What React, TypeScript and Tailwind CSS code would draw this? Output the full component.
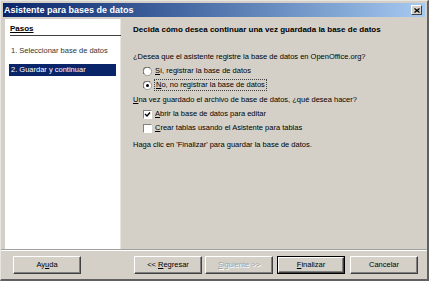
import React from 'react';

const font = { fontFamily: '"Liberation Sans", Arial, sans-serif' };

function Radio({ checked }: { checked?: boolean }) {
  return (
    <svg width="9" height="9" viewBox="0 0 12 12" className="shrink-0">
      <circle cx="6" cy="6" r="5.5" fill="#fff" stroke="#808080" />
      <path d="M1.5 9.5 A5 5 0 0 1 9.5 1.5" fill="none" stroke="#404040" />
      {checked && <circle cx="6" cy="6" r="2" fill="#000" />}
    </svg>
  );
}

function Check({ checked }: { checked?: boolean }) {
  return (
    <div className="w-[9px] h-[9px] shrink-0 bg-white border-t border-l border-t-[#808080] border-l-[#808080] border-b border-r border-b-white border-r-white flex items-center justify-center">
      {checked && (
        <svg width="7" height="7" viewBox="0 0 7 7">
          <path d="M1 3 L3 5 L6 1.5" fill="none" stroke="#000" strokeWidth="1.4" />
        </svg>
      )}
    </div>
  );
}

function Btn({ children, disabled, def }: { children: React.ReactNode; disabled?: boolean; def?: boolean }) {
  return (
    <div className={`w-[68px] h-[18px] ${def ? 'border border-black' : ''} flex`}>
      <div className="flex-1 flex items-center justify-center bg-[#d4d0c8] border-t border-l border-t-white border-l-white border-b border-r border-b-[#404040] border-r-[#404040] shadow-[inset_-1px_-1px_0_#808080]">
        <span className={`text-[7.5px] ${disabled ? 'text-[#a0a0a0] [text-shadow:1px_1px_0_#fff]' : 'text-black'}`}>{children}</span>
      </div>
    </div>
  );
}

export default function App() {
  return (
    <div className="w-[430px] h-[284px] bg-white" style={font}>
      <div className="w-[429px] h-[281px] bg-[#d4d0c8] border-t border-l border-t-[#e8e6e0] border-l-[#e8e6e0] border-r-2 border-b-2 border-r-[#606060] border-b-[#606060] flex flex-col">
        {/* title bar */}
        <div className="mx-[2px] mt-[2px] h-[14px] bg-gradient-to-r from-[#0a246a] to-[#a6caf0] flex items-center justify-between pl-[1px] pr-[3px]">
          <span className="text-white font-bold text-[9px] leading-none">Asistente para bases de datos</span>
          <div className="w-[11px] h-[10px] bg-[#d4d0c8] border-t border-l border-t-white border-l-white border-b border-r border-b-[#404040] border-r-[#404040] flex items-center justify-center">
            <svg width="6" height="5" viewBox="0 0 6 5">
              <path d="M0.5 0.5 L5.5 4.5 M5.5 0.5 L0.5 4.5" stroke="#000" strokeWidth="1.3" />
            </svg>
          </div>
        </div>

        {/* body */}
        <div className="flex flex-1 mt-[2px]">
          <div className="ml-[4px] w-[116px] bg-white border-r border-r-[#e8e6e0] pl-[5px] pt-[5px] leading-[10px]">
            <div className="font-bold text-[8px] border-b border-b-[#404040] pb-[1px] mr-[-1px]">
              <span className="underline">Pasos</span>
            </div>
            <div className="text-[7.5px] mt-[10px] text-[#333] pl-[1px]">1. Seleccionar base de datos</div>
            <div className="text-[7.5px] mt-[8px] h-[12px] mr-[4px] ml-[-1px] pl-[2px] bg-[#0a246a] text-white flex items-center">2. Guardar y continuar</div>
          </div>
          <div className="flex-1 pl-[12px] pt-[6px] text-[7.5px] leading-[10px] text-black">
            <div className="font-bold text-[8px]">Decida cómo desea continuar una vez guardada la base de datos</div>
            <div className="mt-[17px]">¿Desea que el asistente registre la base de datos en OpenOffice.org?</div>
            <div className="mt-[4px] ml-[10px] flex items-center gap-[3px]">
              <Radio />
              <span><u>S</u>í, registrar la base de datos</span>
            </div>
            <div className="mt-[4px] ml-[10px] flex items-center gap-[3px]">
              <Radio checked />
              <span className="outline outline-1 outline-dotted outline-[#404040] px-[1px]"><u>N</u>o, no registrar la base de datos</span>
            </div>
            <div className="mt-[5px]"><u>U</u>na vez guardado el archivo de base de datos, ¿qué desea hacer?</div>
            <div className="mt-[4px] ml-[10px] flex items-center gap-[3px]">
              <Check checked />
              <span><u>A</u>brir la base de datos para editar</span>
            </div>
            <div className="mt-[4px] ml-[10px] flex items-center gap-[3px]">
              <Check />
              <span><u>C</u>rear tablas usando el Asistente para tablas</span>
            </div>
            <div className="mt-[7px]">Haga clic en 'Finalizar' para guardar la base de datos.</div>
          </div>
        </div>

        {/* separator */}
        <div className="h-[2px] border-t border-t-[#a0a0a0] border-b border-b-white" />

        {/* buttons */}
        <div className="h-[28px] flex items-center pl-[12px] pr-[9px]">
          <Btn>Ay<u>u</u>da</Btn>
          <div className="flex-1" />
          <div className="flex">
            <Btn>&lt;&lt; <u>R</u>egresar</Btn>
            <div className="ml-[3px]"><Btn disabled><u>S</u>iguiente &gt;&gt;</Btn></div>
            <div className="ml-[4px]"><Btn def><u>F</u>inalizar</Btn></div>
            <div className="ml-[5px]"><Btn>Cancelar</Btn></div>
          </div>
        </div>
      </div>
    </div>
  );
}
